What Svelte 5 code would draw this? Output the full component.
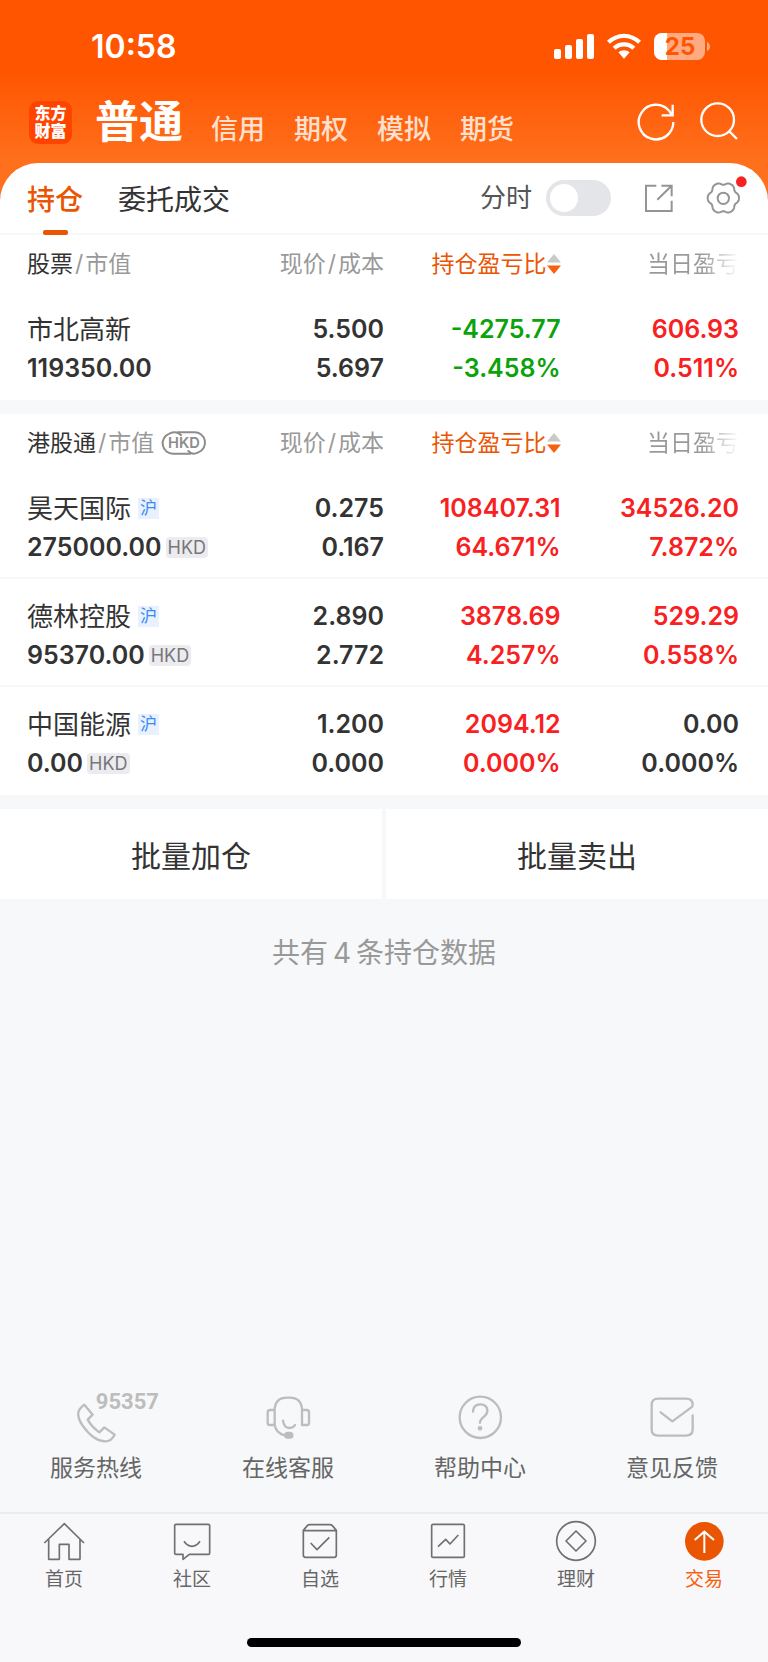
<script>
  let intraday = $state(false);

  const markets = ['信用', '期权', '模拟', '期货'];

  const sections = [
    {
      title: '股票',
      currency: false,
      rows: [
        { name: '市北高新', value: '119350.00', price: '5.500', cost: '5.697', gain: '-4275.77', gainPct: '-3.458%', tone: 'down', day: '606.93', dayPct: '0.511%', dayTone: 'up' }
      ]
    },
    {
      title: '港股通',
      currency: true,
      rows: [
        { name: '昊天国际', value: '275000.00', price: '0.275', cost: '0.167', gain: '108407.31', gainPct: '64.671%', tone: 'up', day: '34526.20', dayPct: '7.872%', dayTone: 'up' },
        { name: '德林控股', value: '95370.00', price: '2.890', cost: '2.772', gain: '3878.69', gainPct: '4.257%', tone: 'up', day: '529.29', dayPct: '0.558%', dayTone: 'up' },
        { name: '中国能源', value: '0.00', price: '1.200', cost: '0.000', gain: '2094.12', gainPct: '0.000%', tone: 'up', day: '0.00', dayPct: '0.000%', dayTone: 'flat' }
      ]
    }
  ];

  // Six-lobed outline of the settings gear
  const gear = Array.from({ length: 120 }, (_, i) => {
    const a = (i * Math.PI) / 60;
    const r = 44 + 3.6 * Math.cos(6 * a) - 0.7 * Math.cos(12 * a);
    return `${(1017 + r * Math.cos(a)).toFixed(1)},${(598 + r * Math.sin(a)).toFixed(1)}`;
  }).join(' ');
</script>

<div class="page">
  <div class="top">
    <div class="status">
      <span class="time">10:58</span>
      <div class="signals">
        <svg width="40" height="26" viewBox="0 0 40 26" fill="#fff" aria-hidden="true">
          <rect x="0" y="16" width="7" height="10" rx="2" />
          <rect x="11" y="12" width="7" height="14" rx="2" />
          <rect x="22" y="6" width="7" height="20" rx="2" />
          <rect x="33" y="1" width="7" height="25" rx="2" />
        </svg>
        <svg width="36" height="26" viewBox="664 96 106 78" fill="#fff" aria-hidden="true">
          <path d="M666 119a74 74 0 0 1 102 0l-9 9a60 60 0 0 0-84 0z" />
          <path d="M683 137a50 50 0 0 1 68 0l-9 9a37 37 0 0 0-50 0z" />
          <path d="M700 154a26 26 0 0 1 34 0l-17 19z" />
        </svg>
        <svg width="57" height="27" viewBox="0 0 57 27" aria-hidden="true">
          <rect width="51" height="27" rx="8" fill="#ffaa80" />
          <path d="M8 0h5v27H8a8 8 0 0 1-8-8V8a8 8 0 0 1 8-8z" fill="#fff" />
          <path d="M53 9q3 1.500 3 4.500t-3 4.500z" fill="#ffaa80" />
          <text x="26" y="22" text-anchor="middle" fill="#ff5500" class="charge">25</text>
        </svg>
      </div>
    </div>

    <nav class="nav">
      <a class="logo" href="#home"><span>东方</span><span>财富</span></a>
      <a class="current" href="#normal">普通</a>
      <div class="markets">
        {#each markets as m}<a href="#market">{m}</a>{/each}
      </div>
      <div class="actions">
        <button aria-label="刷新">
          <svg width="44" height="44" viewBox="748 301 132 132" fill="none" stroke="#fff" stroke-width="7">
            <path d="M866 367a52 52 0 1 1-12-33l8 12M864 315v32h-33" />
          </svg>
        </button>
        <button aria-label="搜索">
          <svg width="44" height="44" viewBox="937 301 132 132" fill="none" stroke="#fff" stroke-width="7">
            <circle cx="999" cy="360" r="49" />
            <path d="M1034 395l23 23" />
          </svg>
        </button>
      </div>
    </nav>

    <div class="bar">
      <a class="tab active" href="#positions">持仓</a>
      <a class="tab" href="#orders">委托成交</a>
      <div class="tools">
        <label class="switch">分时<input type="checkbox" role="switch" bind:checked={intraday} /></label>
        <button aria-label="分享">
          <svg width="32" height="32" viewBox="773 549 96 96" fill="none" stroke="#949494" stroke-width="6">
            <path d="M816 560h-31v76h77v-31M831 560h31v32M861 561l-42 41" />
          </svg>
        </button>
        <button aria-label="设置">
          <svg width="36" height="36" viewBox="962 544 108 108" fill="none" stroke="#949494" stroke-width="6">
            <polygon points={gear} stroke-linejoin="round" />
            <circle cx="1017" cy="599" r="17" />
            <circle cx="1071" cy="549" r="16" fill="#f82020" stroke="none" />
          </svg>
        </button>
      </div>
    </div>
  </div>

  {#each sections as s}
    <table>
      <thead>
        <tr>
          <th>
            <div class="title">
              <span><b>{s.title}</b><i>/</i>市值</span>
              {#if s.currency}
                <button class="cur" aria-label="切换币种">
                  <svg width="44" height="26" viewBox="485 60 132 78" fill="none" stroke="#8c8c8c" stroke-width="6">
                    <path d="M572 131h-53a31 31 0 0 1-12-60q8-4 17-4 8 0 20 10M530 67h52a31 31 0 0 1 12 60q-8 4-14 4-8 0-18-10" />
                    <text x="551" y="115" text-anchor="middle" class="curtext">HKD</text>
                  </svg>
                </button>
              {/if}
            </div>
          </th>
          <th>现价<i>/</i>成本</th>
          <th>
            <button class="sort">持仓盈亏比<svg width="14" height="20" viewBox="0 0 14 20" aria-hidden="true">
              <path d="M7 0l7 8.500H0z" fill="#c9c9c9" /><path d="M7 20l7-8.500H0z" fill="#f9600d" />
            </svg></button>
          </th>
          <th><span class="fade">当日盈亏</span></th>
        </tr>
      </thead>
      <tbody>
        {#each s.rows as r}
          <tr>
            <td>
              <div class="line name">{r.name}{#if s.currency}<span class="hu">沪</span>{/if}</div>
              <div class="line">{r.value}{#if s.currency}<span class="hkd">HKD</span>{/if}</div>
            </td>
            <td><div class="line">{r.price}</div><div class="line">{r.cost}</div></td>
            <td class={r.tone}><div class="line">{r.gain}</div><div class="line">{r.gainPct}</div></td>
            <td class={r.dayTone}><div class="line">{r.day}</div><div class="line">{r.dayPct}</div></td>
          </tr>
        {/each}
      </tbody>
    </table>
  {/each}

  <div class="batch">
    <button>批量加仓</button>
    <button>批量卖出</button>
  </div>

  <p class="count">共有<span>4</span>条持仓数据</p>

  <div class="services">
    <a href="#hotline">
      <svg width="126" height="54" viewBox="99 61 378 162" fill="none" stroke="#bdbdbd" stroke-width="7" stroke-linejoin="round">
        <path d="M253 105l25 30-15 15q12 22 35 38l15-15 31 22q-10 20-28 20-35 0-68-47-16-23-13-40 3-12 18-23z" />
        <text x="382" y="117" text-anchor="middle" class="phone">95357</text>
      </svg>
      服务热线
    </a>
    <a href="#support">
      <svg width="126" height="54" viewBox="675 61 378 162" fill="none" stroke="#bdbdbd" stroke-width="7" stroke-linecap="round" stroke-linejoin="round">
        <path d="M824 166v-44q0-38 38-38h6q38 0 38 38v44h14q7 0 7-7v-31q0-7-7-7h-14M824 121h-14q-7 0-7 7v31q0 7 7 7h14q4 24 30 31M849 153q3 22 19 22 12 0 17-9" />
        <rect x="856" y="190" width="21" height="14" rx="7" fill="#bdbdbd" />
      </svg>
      在线客服
    </a>
    <a href="#help">
      <svg width="126" height="54" viewBox="99 61 378 162" fill="none" stroke="#bdbdbd" stroke-width="7" stroke-linecap="round">
        <circle cx="289" cy="143" r="62" />
        <path d="M267 126q1-22 22-22 21 0 21 20 0 9-10 17-12 10-12 18" />
        <circle cx="288" cy="176" r="7" fill="#bdbdbd" stroke="none" />
      </svg>
      帮助中心
    </a>
    <a href="#feedback">
      <svg width="126" height="54" viewBox="675 61 378 162" fill="none" stroke="#bdbdbd" stroke-width="7" stroke-linecap="round" stroke-linejoin="round">
        <path d="M830 128l35 27 57-42q4-3 4-8 0-18-20-18h-84q-19 0-19 19v73q0 19 19 19h84q20 0 20-19v-42" />
      </svg>
      意见反馈
    </a>
  </div>

  <nav class="tabbar">
    <div class="items">
      <a href="#home">
        <svg width="44" height="44" viewBox="126 448 132 132" fill="none" stroke="#707070" stroke-width="5" stroke-linejoin="round">
          <path d="M133 520l60-58 59 58M146 509v60h32v-45h29v45h33v-60" />
        </svg>
        首页
      </a>
      <a href="#community">
        <svg width="44" height="44" viewBox="510 448 132 132" fill="none" stroke="#707070" stroke-width="5" stroke-linejoin="round">
          <path d="M528 464h97q4 0 4 4v82q0 4-4 4h-57l-19 15v-15h-21q-4 0-4-4v-82q0-4 4-4zM552 515q10 15 24 15t24-15" />
        </svg>
        社区
      </a>
      <a href="#watchlist">
        <svg width="44" height="44" viewBox="894 448 132 132" fill="none" stroke="#707070" stroke-width="5" stroke-linejoin="round">
          <path d="M910 482l12-14q3-3 7-3h61q4 0 7 3l12 14v75q0 6-6 6h-87q-6 0-6-6zM910 483h99M932 520l19 20 37-37" />
        </svg>
        自选
      </a>
      <a href="#quotes">
        <svg width="44" height="44" viewBox="126 448 132 132" fill="none" stroke="#707070" stroke-width="5" stroke-linejoin="round">
          <rect x="143" y="464" width="98" height="99" rx="4" />
          <path d="M162 531l23-22 13 14 25-27" />
        </svg>
        行情
      </a>
      <a href="#wealth">
        <svg width="44" height="44" viewBox="510 448 132 132" fill="none" stroke="#707070" stroke-width="5" stroke-linejoin="round">
          <circle cx="576" cy="514" r="58" />
          <path d="M576 484l30 30-30 30-30-30z" />
        </svg>
        理财
      </a>
      <a class="on" href="#trade">
        <svg width="44" height="44" viewBox="894 448 132 132" fill="none" stroke="#fff" stroke-width="6">
          <circle cx="961" cy="515" r="58" fill="#ea5504" stroke="none" />
          <path d="M961 550v-63M932 511l29-25 29 25" />
        </svg>
        交易
      </a>
    </div>
    <div class="home"></div>
  </nav>
</div>

<style>
  :global(body) { margin: 0; }
  .page {
    min-height: 100vh;
    display: flex;
    flex-direction: column;
    background: #f7f8fa;
    color: #333;
    font-family: Inter, "Noto Sans CJK SC", sans-serif;
  }
  a { color: inherit; text-decoration: none; }
  button {
    border: 0;
    padding: 0;
    background: none;
    font: inherit;
    color: inherit;
    cursor: pointer;
  }
  svg { display: block; flex: none; overflow: visible; }

  .top { background: linear-gradient(#ff5500 70px, #ff701d 163px); color: #fff; }
  .status {
    height: 94px;
    box-sizing: border-box;
    padding: 0 57px 2px 91px;
    display: flex;
    align-items: center;
    justify-content: space-between;
  }
  .time { font-size: 32px; font-weight: 600; }
  .signals { display: flex; align-items: center; gap: 12px; }
  .charge { font-size: 24px; font-weight: 700; }

  .nav {
    height: 69px;
    box-sizing: border-box;
    padding: 0 27px 13px 29px;
    display: flex;
    align-items: center;
  }
  .logo {
    width: 43px;
    height: 43px;
    border-radius: 9px;
    background: #ff4400;
    display: flex;
    flex-direction: column;
    align-items: center;
    justify-content: center;
    font-size: 16px;
    line-height: 18px;
    font-weight: 900;
  }
  .current { margin-left: 23px; font-size: 44px; line-height: 56px; font-weight: 700; }
  .markets {
    display: flex;
    gap: 29px;
    margin-left: 28px;
    padding-top: 15px;
    font-size: 27px;
    line-height: 32px;
    font-weight: 500;
    color: #ffe0cf;
  }
  .actions { margin-left: auto; display: flex; gap: 19px; }

  .bar {
    height: 72px;
    box-sizing: border-box;
    border-bottom: 2px solid #f7f8fa;
    border-radius: 38px 38px 0 0;
    background: #fff;
    color: #333;
    padding: 0 27px 0 27px;
    display: flex;
    align-items: center;
    gap: 35px;
  }
  .tab {
    position: relative;
    padding-top: 4px;
    font-size: 28px;
    line-height: 66px;
  }
  .active { color: #ea5504; font-weight: 500; }
  .active::after {
    content: "";
    position: absolute;
    left: 50%;
    bottom: -2px;
    width: 25px;
    height: 5px;
    margin-left: -12px;
    border-radius: 2px;
    background: #ea5504;
  }
  .tools { margin-left: auto; display: flex; align-items: center; gap: 31px; }
  .switch {
    display: flex;
    align-items: center;
    gap: 14px;
    font-size: 26px;
    line-height: 36px;
    color: #555;
  }
  .switch input {
    appearance: none;
    margin: 0;
    width: 65px;
    height: 36px;
    padding: 4px;
    box-sizing: border-box;
    border-radius: 18px;
    background: #e4e5e8;
    display: flex;
  }
  .switch input::before {
    content: "";
    width: 28px;
    height: 28px;
    border-radius: 14px;
    background: #fff;
  }
  .switch input:checked { background: #ea5504; justify-content: flex-end; }

  table {
    width: 100%;
    table-layout: fixed;
    border-spacing: 0;
    background: #fff;
    margin-bottom: 14px;
  }
  th, td { padding: 0; text-align: right; box-sizing: border-box; }
  th:nth-child(1) { width: 30%; }
  th:nth-child(2) { width: 20%; }
  th:nth-child(3) { width: 23%; }
  th:nth-child(4) { width: 27%; }
  th:first-child, td:first-child { padding-left: 27px; text-align: left; }
  th:last-child, td:last-child { padding-right: 29px; }
  th {
    height: 57px;
    font-size: 23px;
    line-height: 32px;
    font-weight: 400;
    color: #999;
    white-space: nowrap;
  }
  th b { font-weight: 400; color: #333; }
  th i { font-style: normal; margin: 0 2px; }
  .title { display: flex; align-items: center; gap: 8px; }
  .curtext { font-size: 44px; font-weight: 600; fill: #8c8c8c; stroke: none; }
  .sort { display: inline-flex; align-items: center; color: #ea5504; vertical-align: top; }
  .fade {
    background: linear-gradient(90deg, #999 60%, #fff);
    background-clip: text;
    color: transparent;
  }
  td {
    height: 108px;
    padding-top: 18px;
    vertical-align: top;
    border-bottom: 2px solid #f7f8fa;
    font-size: 25px;
    font-weight: 600;
  }
  tr:last-child td { border-bottom-color: #fff; }
  .line {
    height: 39px;
    line-height: 39px;
    display: flex;
    align-items: center;
    justify-content: flex-end;
  }
  td:first-child .line { justify-content: flex-start; }
  .name { font-size: 26px; font-weight: 400; }
  .up { color: #f82020; }
  .down { color: #0aa30a; }
  .hu {
    margin-left: 7px;
    width: 21px;
    height: 21px;
    background: #e8f1fd;
    color: #3a8af5;
    font-size: 17px;
    line-height: 21px;
    text-align: center;
  }
  .hkd {
    margin-left: 4px;
    padding: 0 2px;
    height: 21px;
    border-radius: 4px;
    background: #ececf0;
    color: #777;
    font-size: 18px;
    line-height: 21px;
    font-weight: 400;
  }

  .batch { display: grid; grid-template-columns: 1fr 1fr; gap: 4px; }
  .batch button { height: 90px; background: #fff; font-size: 30px; }

  .count { margin: 34px 0 0; text-align: center; font-size: 28px; line-height: 40px; color: #999; }
  .count span { margin: 0 5px; }

  .services {
    margin-top: auto;
    padding-bottom: 28px;
    display: grid;
    grid-template-columns: repeat(4, 1fr);
    font-size: 23px;
    line-height: 32px;
    color: #666;
  }
  .services a { display: flex; flex-direction: column; align-items: center; gap: 8px; }
  .phone { font: 700 66px Roboto, sans-serif; fill: #bdbdbd; stroke: none; }

  .tabbar {
    border-top: 2px solid #ebecee;
    background: #f8f8fa;
    padding: 5px 0 15px;
  }
  .items {
    display: grid;
    grid-template-columns: repeat(6, 1fr);
    font-size: 19px;
    line-height: 28px;
    color: #666;
  }
  .items a { display: flex; flex-direction: column; align-items: center; gap: 3px; }
  .items .on { color: #f9600d; }
  .home {
    width: 274px;
    height: 9px;
    margin: 44px auto 0;
    border-radius: 5px;
    background: #000;
  }
</style>
